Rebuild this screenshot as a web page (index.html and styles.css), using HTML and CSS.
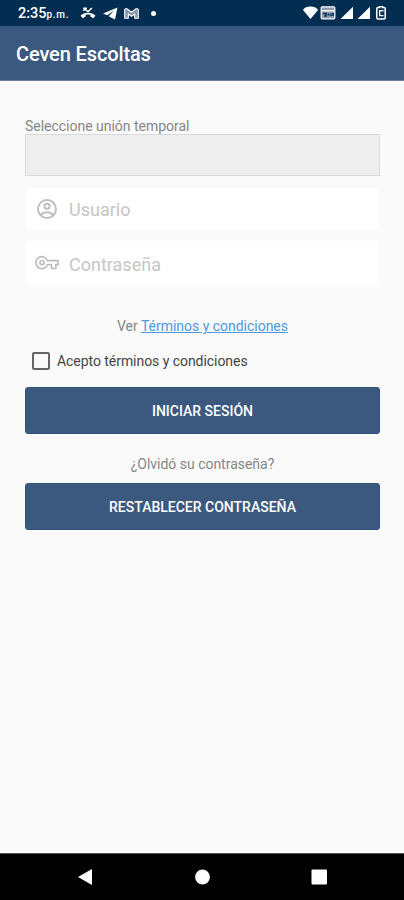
FILE: index.html
```html
<!DOCTYPE html>
<html lang="es">
<head>
<meta charset="UTF-8">
<title>Ceven Escoltas</title>
<link rel="stylesheet" href="styles.css">
</head>
<body>
<div class="phone">
    <div class="status">
        <span class="time">2:35<small>p.m.</small></span>
        <svg class="missed" width="16" height="12" viewBox="0 0 16 12">
            <path d="M4 4V1.200h3M4.200 1.400l3.800 3.400 3.800-3.800" fill="none" stroke="#fff" stroke-width="1.500"/>
            <path d="M8 5.800c-3 0-5.600 1-7.500 2.900l2.300 2.500 2.800-1.800V7.900c1.600-.5 3.200-.5 4.800 0v1.500l2.800 1.800 2.300-2.500C13.600 6.800 11 5.800 8 5.800z" fill="#fff"/>
        </svg>
        <svg class="plane" width="15" height="13" viewBox="0 0 15 13">
            <path d="M14.500.5L0 6.500l4.200 1.700L11 3.600 6 9v.4l6 3.100z" fill="#fff"/>
        </svg>
        <svg class="mail" width="15" height="11" viewBox="0 0 15 11">
            <path d="M.7 1.800Q.7.700 1.800.700H3l4.500 3.600L12 .700h1.200q1.100 0 1.100 1.100v8.500h-3.600V6L7.500 8.300 4.300 6v4.300H.7z" fill="#8294aa" stroke="#fff" stroke-width="1.100"/>
        </svg>
        <i class="dot"></i>
        <svg class="signals" width="84" height="14" viewBox="0 0 84 14">
            <path d="M0 4Q.4 2.800 2.500 1.600Q7.500-.7 12.500 1.600Q14.600 2.800 15 4L7.500 13z" fill="#fff"/>
            <rect x="18.200" y=".8" width="13.600" height="12" rx="1" fill="#8c9bb0" stroke="#fff" stroke-width="1.200"/>
            <path d="M18.500 4.800h13" stroke="#fff" stroke-width="1.400"/>
            <path d="M20 7.500h3v2.500h-1.500M25.500 9.500V7.500M28 10V7.500M30.200 10V7" fill="none" stroke="#032e52" stroke-width="1.600"/>
            <path d="M37.500 13h12.500V.8zM54.500 13H67V.8z" fill="#fff"/>
            <path d="M76.500 1.400V.5h3v.9h1.500q1.200 0 1.200 1v9.300q0 1.200-1.200 1.200h-6q-1.200 0-1.200-1.200V2.400q0-1 1.200-1z" fill="#0b3155" stroke="#fff" stroke-width="1.500"/>
            <path d="M79.800 5.500V4.700h-3.100v5h3.100v-.8" fill="none" stroke="#fff" stroke-width="1.300"/>
        </svg>
    </div>
    <div class="bar"><h1>Ceven Escoltas</h1></div>
    <div class="con">
        <label class="tip">Seleccione unión temporal</label>
        <div class="select"></div>
        <div class="field user">
            <svg width="22" height="22" viewBox="0 0 22 22" fill="none" stroke="#bdbdbd" stroke-width="1.900">
                <circle cx="11" cy="11" r="9"/>
                <circle cx="11" cy="8.200" r="2.600"/>
                <path d="M4.800 17c1.800-2 3.900-2.800 6.200-2.800s4.400.8 6.200 2.800"/>
            </svg>
            <span>Usuario</span>
        </div>
        <div class="field pass">
            <svg width="24" height="16" viewBox="0 0 24 16" fill="none" stroke="#bdbdbd" stroke-width="1.700">
                <path d="M12.500 5.700H23v4h-2.200v3.800h-4.300V9.700h-4A6 6 0 1 1 12.500 5.700z"/>
                <circle cx="7" cy="7.600" r="2.100"/>
            </svg>
            <span>Contraseña</span>
        </div>
        <p class="terms">Ver <a href="#">Términos y condiciones</a></p>
        <div class="check"><i></i><span>Acepto términos y condiciones</span></div>
        <button class="btn login">INICIAR SESIÓN</button>
        <p class="forgot">¿Olvidó su contraseña?</p>
        <button class="btn reset">RESTABLECER CONTRASEÑA</button>
    </div>
    <div class="nav">
        <svg width="16" height="18" viewBox="0 0 16 18"><path d="M1 9L15 1v16z" fill="#fff"/></svg>
        <svg width="16" height="16" viewBox="0 0 16 16"><circle cx="8.500" cy="8" r="7.400" fill="#fff"/></svg>
        <svg width="16" height="16" viewBox="0 0 16 16"><rect x=".5" y=".5" width="15.500" height="15" rx="1" fill="#fff"/></svg>
    </div>
</div>
</body>
</html>
```
FILE: styles.css
```css
*{margin:0;padding:0;box-sizing:border-box;}
body{
	font-family:Roboto,"Liberation Sans",sans-serif;
	background:#fafafa;
}
.phone{
	display:flex;
	flex-direction:column;
	width:404px;
	height:900px;
	overflow:hidden;
}
.status{
	display:flex;
	align-items:center;
	height:26px;
	padding:0 18px;
	background:#032e52;
	color:#fff;
}
.time{
	width:53px;
	font-size:14.5px;
	font-weight:500;
	white-space:nowrap;
}
.time small{font-size:10px;letter-spacing:.7px;}
.missed{margin-left:9px;}
.plane{margin-left:7px;}
.mail{margin-left:6px;}
.dot{
	width:5px;
	height:5px;
	margin-left:12px;
	border-radius:50%;
	background:#fff;
}
.signals{margin-left:auto;margin-right:-1px;}
.bar{
	display:flex;
	align-items:center;
	height:55px;
	padding:2px 0 0 16px;
	border-bottom:1px solid #6d7b94;
	background:#3b587f;
}
h1{
	color:#fff;
	font-size:20px;
	font-weight:500;
	letter-spacing:-.12px;
}
.con{
	flex:1;
	padding:37px 24px 0 25px;
}
.tip{
	display:block;
	height:16px;
	color:#868686;
	font-size:14px;
	line-height:16px;
	letter-spacing:-.02px;
}
.select{
	height:42px;
	border:1px solid #d9d9d9;
	background:#eee;
}
.field{
	display:flex;
	align-items:center;
	margin:0 1px;
	border-radius:3px;
	background:#fff;
	color:#c6c6c6;
	font-size:18px;
}
.user{
	height:42px;
	margin-top:12px;
	padding-left:10px;
}
.user span{margin-left:11px;}
.pass{
	height:44px;
	margin-top:11px;
	padding-left:9px;
}
.pass span{
	margin-left:10px;
	padding-top:2px;
}
.terms,
.forgot{
	color:#868686;
	font-size:14px;
	line-height:18px;
	text-align:center;
	letter-spacing:-.02px;
}
.terms{margin-top:32px;}
.terms a{color:#4f98e2;}
.check{
	display:flex;
	align-items:center;
	height:20px;
	margin-top:16px;
	padding-left:7px;
	color:#444;
	font-size:14px;
	letter-spacing:-.05px;
}
.check i{
	width:18px;
	height:18px;
	margin-right:7px;
	border:2px solid #666;
	border-radius:2px;
}
.btn{
	display:block;
	width:100%;
	height:47px;
	border:1px solid #2e5079;
	border-radius:3px;
	background:#3b587f;
	color:#fff;
	font-family:inherit;
	font-size:14px;
	font-weight:500;
}
.login{margin-top:16px;}
.forgot{margin-top:21px;}
.reset{margin-top:10px;}
.nav{
	display:flex;
	justify-content:space-between;
	align-items:center;
	height:47px;
	padding:0 77px;
	border-top:1px solid #555;
	background:#000;
}
```
